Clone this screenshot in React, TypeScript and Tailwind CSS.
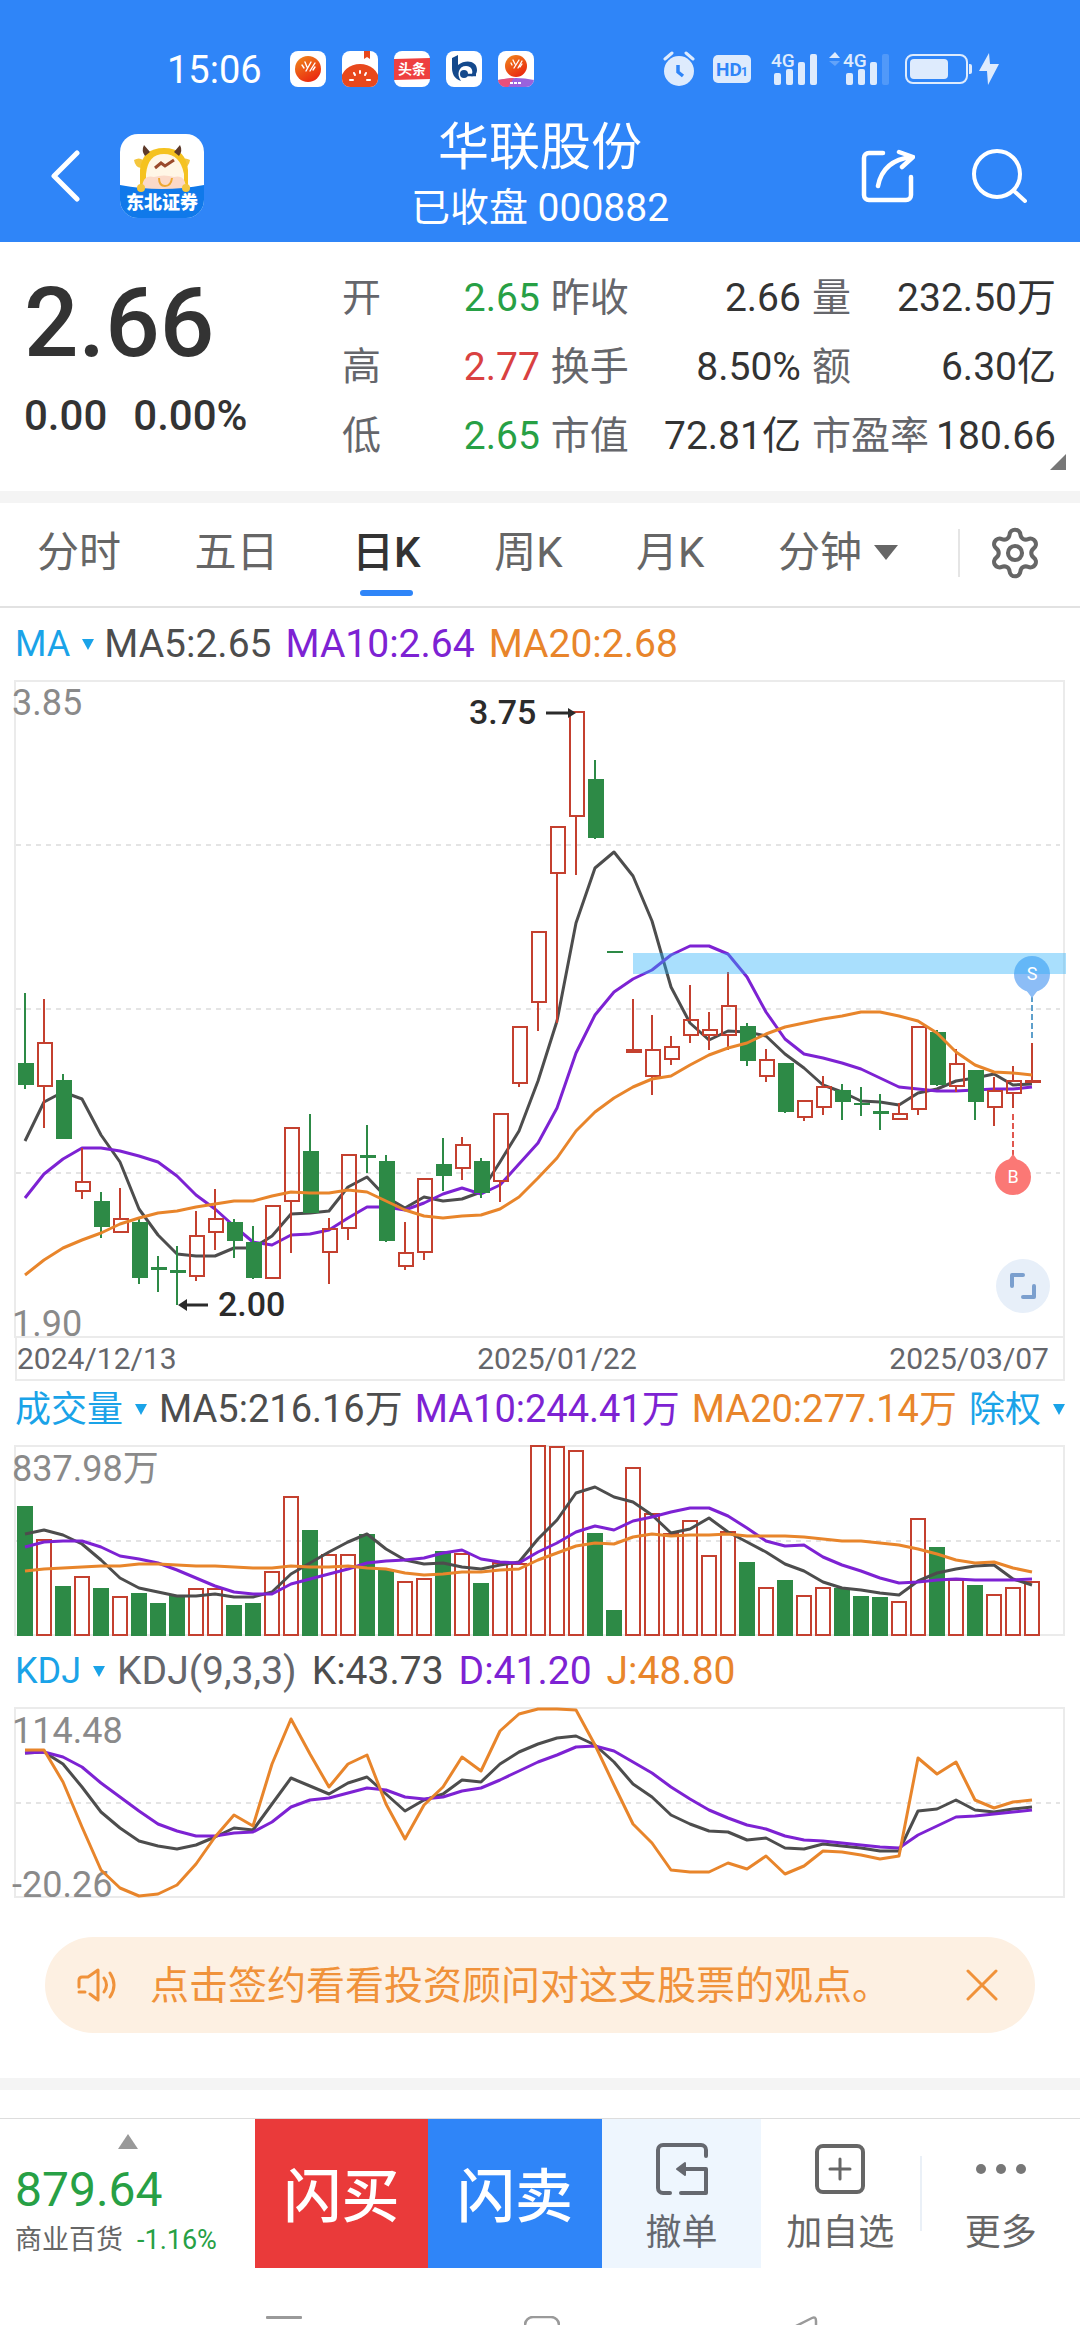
import React from 'react';
import { Settings } from 'lucide-react';

type Candle = ['u' | 'd', number, number, number, number];

const UP = '#c4402f';
const DOWN = '#2d8a46';
const DARK = '#4d4d4d';
const PURPLE = '#7d22d3';
const ORANGE = '#e8852b';

// one slot per trading day
const slotX = (i: number) => 25 + i * 19;

// direction, high, body top, body bottom, low
const candles: Candle[] = [
  ['d', 313, 384, 404, 409], ['u', 319, 363, 406, 448], ['d', 394, 401, 458, 459], ['u', 468, 502, 511, 519],
  ['d', 512, 522, 546, 558], ['u', 508, 539, 552, 552], ['d', 538, 543, 597, 604], ['d', 576, 588, 589, 612],
  ['d', 566, 591, 592, 625], ['u', 531, 556, 596, 601], ['u', 509, 539, 552, 570], ['d', 539, 543, 560, 578],
  ['d', 546, 563, 597, 599], ['u', 526, 526, 598, 598], ['u', 448, 448, 521, 573], ['d', 434, 472, 532, 532],
  ['u', 538, 549, 572, 604], ['u', 475, 475, 548, 560], ['d', 445, 476, 477, 493], ['d', 475, 482, 560, 562],
  ['u', 542, 573, 586, 590], ['u', 499, 499, 572, 580], ['d', 458, 485, 495, 511], ['u', 457, 465, 488, 500],
  ['d', 478, 482, 512, 518], ['u', 434, 434, 501, 522], ['u', 347, 347, 403, 407], ['u', 252, 252, 322, 351],
  ['u', 147, 147, 193, 343], ['u', 32, 32, 136, 195], ['d', 80, 100, 157, 159], ['d', 272, 272, 272, 272],
  ['u', 319, 370, 372, 372], ['u', 335, 370, 396, 415], ['u', 356, 367, 379, 385], ['u', 305, 340, 355, 363],
  ['u', 332, 350, 355, 370], ['u', 292, 326, 355, 370], ['d', 343, 347, 380, 386], ['u', 369, 380, 396, 402],
  ['d', 384, 384, 431, 433], ['u', 421, 421, 437, 441], ['u', 396, 407, 427, 435], ['d', 404, 411, 421, 440],
  ['d', 407, 424, 424, 436], ['d', 414, 432, 433, 450], ['u', 423, 434, 439, 439], ['u', 347, 347, 429, 435],
  ['d', 350, 353, 404, 406], ['u', 369, 384, 406, 412], ['d', 391, 391, 421, 440], ['u', 397, 411, 427, 446],
  ['u', 386, 401, 413, 428], ['u', 363, 401, 402, 402],
];

const priceMa5 = [461, 422, 412, 419, 455, 482, 529, 555, 574, 576, 576, 568, 568, 556, 534, 533, 531, 507, 497, 517, 528, 517, 521, 519, 512, 482, 451, 401, 341, 243, 188, 172, 196, 241, 307, 343, 360, 351, 352, 356, 374, 388, 405, 412, 421, 422, 425, 413, 409, 401, 398, 394, 405, 404];
const priceMa10 = [518, 494, 479, 468, 468, 471, 476, 482, 496, 515, 529, 546, 562, 565, 555, 554, 550, 538, 527, 527, 530, 523, 514, 508, 514, 505, 484, 463, 428, 373, 335, 312, 299, 290, 275, 266, 266, 274, 297, 332, 359, 374, 378, 383, 389, 398, 407, 409, 411, 411, 410, 409, 409, 407];
const priceMa20 = [595, 580, 568, 560, 553, 544, 538, 533, 531, 527, 524, 521, 521, 516, 512, 513, 513, 510, 512, 521, 530, 536, 538, 536, 535, 529, 517, 498, 478, 451, 432, 418, 407, 399, 396, 385, 375, 368, 363, 354, 347, 343, 339, 336, 332, 332, 336, 341, 353, 372, 385, 392, 393, 395];

const volumes = [61, 94, 141, 131, 143, 151, 148, 158, 150, 143, 143, 160, 158, 126, 51, 85, 109, 109, 89, 124, 136, 133, 106, 108, 138, 117, 118, 0, 1, 5, 88, 165, 22, 68, 88, 75, 110, 86, 117, 142, 135, 150, 142, 143, 151, 152, 156, 73, 102, 134, 140, 149, 142, 136];
const volMa5 = [88, 84, 89, 98, 114, 132, 142, 146, 150, 150, 148, 151, 151, 146, 128, 117, 106, 96, 88, 103, 114, 118, 117, 121, 123, 119, 116, 93, 74, 47, 41, 51, 56, 69, 87, 83, 72, 86, 96, 106, 118, 125, 136, 142, 144, 147, 149, 135, 127, 123, 120, 119, 133, 139];
const volMa10 = [101, 96, 95, 95, 101, 110, 113, 117, 124, 132, 140, 146, 148, 148, 138, 133, 128, 123, 117, 115, 114, 112, 107, 104, 113, 116, 117, 106, 97, 86, 80, 84, 75, 71, 66, 62, 62, 70, 82, 95, 100, 99, 111, 119, 125, 132, 137, 136, 134, 133, 134, 134, 134, 133];
const volMa20 = [125, 123, 122, 121, 120, 120, 118, 118, 119, 120, 120, 121, 122, 122, 120, 121, 121, 120, 122, 123, 127, 129, 128, 126, 126, 124, 123, 114, 107, 100, 97, 98, 91, 88, 90, 89, 89, 88, 90, 90, 90, 91, 93, 95, 95, 97, 99, 103, 108, 114, 117, 116, 122, 126];

const kLine = [45, 44, 56, 79, 104, 120, 133, 138, 141, 137, 129, 120, 122, 96, 70, 78, 86, 75, 69, 86, 103, 92, 86, 72, 74, 56, 44, 36, 30, 28, 37, 54, 76, 89, 107, 116, 123, 124, 132, 130, 140, 141, 136, 138, 140, 143, 143, 103, 101, 92, 102, 104, 101, 99];
const dLine = [45, 44, 49, 59, 75, 89, 103, 116, 123, 128, 128, 125, 124, 114, 99, 92, 90, 85, 80, 82, 89, 91, 89, 83, 80, 72, 63, 54, 47, 39, 38, 43, 54, 65, 79, 91, 102, 110, 117, 121, 128, 132, 133, 135, 137, 139, 140, 127, 118, 109, 108, 106, 104, 102];
const jLine = [42, 42, 74, 119, 162, 180, 188, 186, 177, 156, 129, 107, 118, 56, 11, 46, 79, 56, 47, 96, 131, 97, 79, 49, 63, 23, 6, 1, 1, 2, 37, 77, 116, 135, 162, 164, 164, 155, 161, 148, 166, 158, 143, 144, 147, 151, 148, 50, 66, 54, 92, 100, 94, 92];

const quotes = [
  { label: '开', value: '2.65', color: 'text-[#27a045]' },
  { label: '昨收', value: '2.66', color: 'text-[#333333]' },
  { label: '量', value: '232.50万', color: 'text-[#333333]' },
  { label: '高', value: '2.77', color: 'text-[#d94141]' },
  { label: '换手', value: '8.50%', color: 'text-[#333333]' },
  { label: '额', value: '6.30亿', color: 'text-[#333333]' },
  { label: '低', value: '2.65', color: 'text-[#27a045]' },
  { label: '市值', value: '72.81亿', color: 'text-[#333333]' },
  { label: '市盈率', value: '180.66', color: 'text-[#333333]' },
];

const tabs = ['分时', '五日', '日K', '周K', '月K'];

const Line = ({ data, color }: { data: number[]; color: string }) => (
  <polyline
    points={data.map((y, i) => `${slotX(i)},${y}`).join(' ')}
    fill="none"
    stroke={color}
    strokeWidth="3"
    strokeLinejoin="round"
  />
);

const GridLine = ({ y }: { y: number }) => (
  <line x1="16" x2="1060" y1={y} y2={y} stroke="#e4e4e4" strokeWidth="2" strokeDasharray="5 5" />
);

const AxisLabel = ({ y, children }: { y: number; children: string }) => (
  <text x="12" y={y} fontSize="36" fill="#8a8a8a">{children}</text>
);

const Caret = () => (
  <svg className="h-[11px] w-[12px] shrink-0" viewBox="0 0 12 11">
    <path d="M0 0h12L6 11z" fill="#1aa3e8" />
  </svg>
);

const PickerButton = ({ label }: { label: string }) => (
  <button type="button" className="flex items-center gap-3 text-[36px] text-[#1aa3e8]">
    {label}
    <Caret />
  </button>
);

const StatusBar = () => (
  <div className="flex h-[114px] items-center justify-between pt-6 pr-[81px] pl-[167px]">
    <div className="flex items-center gap-4">
      <span className="mr-3 pt-0.5 text-[38px] text-white">15:06</span>
      <svg className="size-9" viewBox="0 0 36 36">
        <defs>
          <linearGradient id="flame" x1="0" y1="0" x2="0.6" y2="1">
            <stop offset="0" stopColor="#f08a1c" />
            <stop offset="1" stopColor="#ea2a10" />
          </linearGradient>
        </defs>
        <rect width="36" height="36" rx="8" fill="#fff" />
        <circle cx="18" cy="18" r="13" fill="url(#flame)" />
        <path d="M12 14l2 3M15 11l2 5M16 20l5-9M20 20l5-8M23 19l2-3" stroke="#fff" strokeWidth="1.4" strokeLinecap="round" />
      </svg>
      <svg className="size-9" viewBox="0 0 36 36">
        <clipPath id="r2"><rect width="36" height="36" rx="8" /></clipPath>
        <g clipPath="url(#r2)">
          <rect width="36" height="36" fill="#fff" />
          <ellipse cx="18" cy="29" rx="19" ry="16" fill="#e8481c" />
          <path d="M22 0h6v8l-3-2-3 2z" fill="#e8481c" />
          <path d="M18 20v2M12 22l1 2M24 22l-1 2M8 29h3M28 29h-3" stroke="#fff" strokeWidth="2" strokeLinecap="round" />
        </g>
      </svg>
      <svg className="size-9" viewBox="0 0 36 36">
        <rect width="36" height="36" rx="8" fill="#fff" />
        <path d="M0 8l36-1v21L0 29z" fill="#ee4040" />
        <text x="18" y="23" fontSize="14" fontWeight="700" textAnchor="middle" fill="#fff">头条</text>
      </svg>
      <svg className="size-9" viewBox="0 0 36 36">
        <rect width="36" height="36" rx="8" fill="#fff" />
        <path d="M6 7l6-3v10c8-6 19-4 19 5 0 4-3 7-6 6 3-4 1-10-5-10-7 0-10 8-5 15-7-2-9-8-9-13z" fill="#14498c" />
        <circle cx="18" cy="23" r="4" fill="#14498c" />
        <path d="M21 24h9" stroke="#14498c" strokeWidth="2.5" />
      </svg>
      <svg className="size-9" viewBox="0 0 36 36">
        <clipPath id="r5"><rect width="36" height="36" rx="8" /></clipPath>
        <g clipPath="url(#r5)">
          <rect width="36" height="36" fill="#fff" />
          <circle cx="18" cy="15" r="11" fill="url(#flame)" />
          <path d="M13 12l1 2M15 9l2 4M16 17l5-8M20 17l4-7M22 16l2-3" stroke="#fff" strokeWidth="1.3" strokeLinecap="round" />
          <path d="M0 29q18-4 36 0v7H0z" fill="#9a62dc" />
          <path d="M0 29q8-2 16-2l-6 9H0z" fill="#e8507a" />
          <path d="M12 32h12" stroke="#fff" strokeWidth="2" strokeDasharray="3 1" />
        </g>
      </svg>
    </div>
    <div className="flex items-center text-[#deebfd]">
      <svg className="h-[36px] w-[32px]" viewBox="0 0 32 36" fill="currentColor">
        <circle cx="16" cy="20" r="15" />
        <path d="M2 8l7-6M30 8l-7-6" stroke="currentColor" strokeWidth="3" strokeLinecap="round" />
        <path d="M15 14v7l5 4" fill="none" stroke="#2f85f8" strokeWidth="3.5" />
      </svg>
      <svg className="ml-[18px] h-[28px] w-[38px]" viewBox="0 0 38 28" fill="currentColor">
        <rect width="38" height="28" rx="5" />
        <text x="3" y="21" fontSize="19" fontWeight="700" fill="#2f85f8">HD</text>
        <text x="28" y="21" fontSize="12" fontWeight="700" fill="#2f85f8">1</text>
      </svg>
      <svg className="ml-[20px] h-[34px] w-[46px] overflow-visible" viewBox="0 0 46 34" fill="currentColor">
        <text x="0" y="15" fontSize="19" fontWeight="500">4G</text>
        <rect x="3" y="21" width="7" height="12" rx="2" />
        <rect x="15" y="17" width="7" height="16" rx="2" />
        <rect x="27" y="10" width="7" height="23" rx="2" />
        <rect x="39" y="2" width="7" height="31" rx="2" />
      </svg>
      <svg className="ml-3 h-[34px] w-[60px] overflow-visible" viewBox="0 0 60 34" fill="currentColor">
        <path d="M0 6l6-6 5 6z" />
        <path d="M0 9h11l-5 5z" opacity="0.3" />
        <text x="14" y="15" fontSize="19" fontWeight="500">4G</text>
        <rect x="17" y="21" width="7" height="12" rx="2" />
        <rect x="29" y="17" width="7" height="16" rx="2" />
        <rect x="41" y="10" width="7" height="23" rx="2" />
        <rect x="53" y="2" width="7" height="31" rx="2" opacity="0.2" />
      </svg>
      <svg className="ml-4 h-[30px] w-[67px]" viewBox="0 0 67 30" fill="currentColor">
        <rect x="1" y="1" width="61" height="28" rx="7" fill="none" stroke="currentColor" strokeWidth="2" />
        <rect x="5" y="5" width="38" height="20" rx="4" />
        <path d="M64 10h1a2 2 0 0 1 2 2v6a2 2 0 0 1-2 2h-1z" />
      </svg>
      <svg className="ml-[7px] h-[32px] w-[20px]" viewBox="0 0 20 32" fill="currentColor">
        <path d="M10 0L0 18h8l1 14L20 11h-9z" />
      </svg>
    </div>
  </div>
);

const BrandLogo = () => (
  <svg className="size-[84px]" viewBox="0 0 84 84" role="img" aria-label="东北证券">
    <clipPath id="brand"><rect width="84" height="84" rx="18" /></clipPath>
    <g clipPath="url(#brand)">
      <rect width="84" height="84" fill="#fff" />
      <path d="M14 26q5-3 9 0l-2 8q-6-1-7-8zM70 26q-5-3-9 0l2 8q6-1 7-8z" fill="#f4c63d" />
      <path d="M20 56V36q2-22 24-22t24 22v20z" fill="#f5c21f" />
      <path d="M24 11q-3 6 1 11l5-4zM60 11q3 6-1 11l-5-4z" fill="#5e3a2a" />
      <path d="M26 56V40q2-20 18-20t20 20v16z" fill="#fff6e6" />
      <path d="M22 56q0-16 12-13 10-3 20 0 12-3 12 13z" fill="#fbd9c8" />
      <path d="M35 34l6-5 4 3 9-6" stroke="#9a4a2c" strokeWidth="3" fill="none" />
      <path d="M39 44q0 8 6 8t7-8" stroke="#eea832" strokeWidth="2" fill="none" />
      <path d="M0 51q42 8 84 0v33H0z" fill="#1079ea" />
      <circle cx="21" cy="54" r="4" fill="#f4c63d" />
      <circle cx="66" cy="54" r="4" fill="#f4c63d" />
      <text x="42" y="75" fontSize="18" fontWeight="900" textAnchor="middle" fill="#fff">东北证券</text>
    </g>
  </svg>
);

const Header = () => (
  <header className="bg-[#2f85f8] text-white">
    <StatusBar />
    <div className="grid h-[128px] grid-cols-[1fr_auto_1fr] items-center pb-1">
      <div className="flex items-center gap-[40px] pl-[50px]">
        <button type="button" aria-label="返回">
          <svg className="h-[52px] w-[30px]" viewBox="0 0 30 52" fill="none" stroke="currentColor" strokeWidth="5" strokeLinecap="round" strokeLinejoin="round">
            <path d="M27 3L4 26l23 23" />
          </svg>
        </button>
        <BrandLogo />
      </div>
      <div className="pt-1 text-center">
        <h1 className="text-[51px] leading-[60px]">华联股份</h1>
        <p className="text-[39px] leading-[60px]">已收盘 000882</p>
      </div>
      <div className="flex items-center justify-end gap-[56px] pr-[53px]">
        <button type="button" aria-label="分享">
          <svg className="size-[56px]" viewBox="0 0 56 56" fill="none" stroke="currentColor" strokeWidth="4.5" strokeLinecap="round" strokeLinejoin="round">
            <path d="M24 5H10a5 5 0 0 0-5 5v37a5 5 0 0 0 5 5h37a5 5 0 0 0 5-5V29" />
            <path d="M19 38Q24 12 53 9M40 4l14 5-11 10" />
          </svg>
        </button>
        <button type="button" aria-label="搜索">
          <svg className="size-[56px]" viewBox="0 0 56 56" fill="none" stroke="currentColor" strokeWidth="4" strokeLinecap="round">
            <circle cx="26" cy="26" r="23" />
            <path d="M43 43l11 10" />
          </svg>
        </button>
      </div>
    </div>
  </header>
);

const QuoteSummary = () => (
  <section className="relative flex h-[249px] pl-[24px]">
    <div className="w-[318px] text-[#333333]">
      <div className="mt-[28px] text-[96px] leading-[106px] font-medium">2.66</div>
      <div className="mt-[12px] flex gap-[26px] text-[42px] leading-[56px] font-medium">
        <span>0.00</span>
        <span>0.00%</span>
      </div>
    </div>
    <dl className="mt-[22px] grid flex-1 grid-cols-[197fr_249fr_243fr] content-start gap-x-[11px] pr-[24px] text-[39px] leading-[69px]">
      {quotes.map((q) => (
        <div key={q.label} className="flex justify-between whitespace-nowrap">
          <dt className="text-[#65666b]">{q.label}</dt>
          <dd className={q.color}>{q.value}</dd>
        </div>
      ))}
    </dl>
    <svg className="absolute right-[14px] bottom-[21px] size-4" viewBox="0 0 16 16">
      <path d="M16 0v16H0z" fill="#777" />
    </svg>
  </section>
);

const PeriodTabs = () => (
  <nav className="flex h-[105px] items-center border-b-2 border-[#e2e2e2] pb-1 text-[42px] text-[#666666]">
    <div className="flex flex-1 items-center justify-between pr-[60px] pl-[37px]">
      {tabs.map((tab) => (
        <button key={tab} type="button" className={tab === '日K' ? 'relative font-medium text-[#333333]' : ''}>
          {tab}
          {tab === '日K' && <span className="absolute inset-x-2 -bottom-3 h-[6px] rounded-full bg-[#2f85f8]" />}
        </button>
      ))}
      <button type="button" className="flex items-center gap-3">
        分钟
        <svg className="h-[15px] w-6" viewBox="0 0 24 15"><path d="M0 0h24L12 15z" fill="#666" /></svg>
      </button>
    </div>
    <button type="button" aria-label="设置" className="flex h-12 w-[122px] items-center border-l-2 border-[#e5e5e5] pl-[27px]">
      <Settings size={56} strokeWidth={1.75} />
    </button>
  </nav>
);

const PriceChart = () => (
  <div className="relative">
    <svg className="block w-full overflow-visible" viewBox="0 0 1080 658">
      <rect x="15" y="1" width="1049" height="656" fill="none" stroke="#ebebeb" strokeWidth="2" />
      <GridLine y={165} />
      <GridLine y={329} />
      <GridLine y={493} />
      <AxisLabel y={35}>3.85</AxisLabel>
      <AxisLabel y={656}>1.90</AxisLabel>
      <Line data={priceMa5} color={DARK} />
      <Line data={priceMa10} color={PURPLE} />
      {candles.map(([dir, high, top, bottom, low], i) => {
        const x = slotX(i);
        const up = dir === 'u';
        const color = up ? UP : DOWN;
        return (
          <g key={i} stroke={color} strokeWidth="2">
            {high < top && <line x1={x} x2={x} y1={high} y2={top} />}
            {low > bottom && <line x1={x} x2={x} y1={bottom} y2={low} />}
            {bottom === top ? (
              <line x1={x - 7} x2={x + 9} y1={top} y2={top} />
            ) : (
              <rect x={x - 6} y={top} width="14" height={bottom - top} fill={up ? 'none' : DOWN} />
            )}
          </g>
        );
      })}
      <Line data={priceMa20} color={ORANGE} />
      <g fill="#2b2b2b" stroke="#2b2b2b">
        <path d="M546 33h24" strokeWidth="3" />
        <path d="M568 28l8 5-8 5z" stroke="none" />
        <path d="M208 625h-24" strokeWidth="3" />
        <path d="M187 619l-9 6 9 6z" stroke="none" />
      </g>
      <text x="469" y="44" fontSize="34" fontWeight="500" fill="#2b2b2b">3.75</text>
      <text x="218" y="636" fontSize="34" fontWeight="500" fill="#2b2b2b">2.00</text>
      <line x1="1032" x2="1032" y1="316" y2="360" stroke="#5d9fcb" strokeWidth="2" strokeDasharray="6 3" />
      <path d="M1026 310h12l-6 8z" fill="#8cbdf6" />
      <circle cx="1032" cy="294" r="18" fill="#8cbdf6" />
      <rect x="633" y="273" width="433" height="21" fill="#29b0fa" opacity="0.4" />
      <text x="1032" y="300" fontSize="18" textAnchor="middle" fill="#fff">S</text>
      <line x1="1013" x2="1013" y1="434" y2="476" stroke="#e0574f" strokeWidth="2" strokeDasharray="6 3" />
      <path d="M1007 482h12l-6-8z" fill="#fb7875" />
      <circle cx="1013" cy="497" r="18" fill="#fb7875" />
      <text x="1013" y="503" fontSize="18" textAnchor="middle" fill="#fff">B</text>
    </svg>
    <button type="button" aria-label="全屏" className="absolute right-[30px] bottom-[25px] flex size-[54px] items-center justify-center rounded-full bg-[#e7eff9]">
      <svg className="size-7" viewBox="0 0 28 28" fill="none" stroke="#7b9fce" strokeWidth="4" strokeLinecap="round" strokeLinejoin="round">
        <path d="M3 14V3h11M14 25h11V14" />
      </svg>
    </button>
  </div>
);

const VolumeChart = () => (
  <svg className="block w-full overflow-visible" viewBox="0 0 1080 190">
    <rect x="15" y="0" width="1049" height="189" fill="none" stroke="#ebebeb" strokeWidth="2" />
    <GridLine y={95} />
    <AxisLabel y={35}>837.98万</AxisLabel>
    {volumes.map((top, i) => {
      const up = candles[i][0] === 'u';
      return (
        <rect
          key={i}
          x={slotX(i) - 7}
          y={top}
          width="14"
          height={189 - top}
          fill={up ? 'none' : DOWN}
          stroke={up ? UP : DOWN}
          strokeWidth="2"
        />
      );
    })}
    <Line data={volMa5} color={DARK} />
    <Line data={volMa10} color={PURPLE} />
    <Line data={volMa20} color={ORANGE} />
  </svg>
);

const KdjChart = () => (
  <svg className="block w-full overflow-visible" viewBox="0 0 1080 190">
    <rect x="15" y="0" width="1049" height="189" fill="none" stroke="#ebebeb" strokeWidth="2" />
    <GridLine y={95} />
    <AxisLabel y={35}>114.48</AxisLabel>
    <AxisLabel y={189}>-20.26</AxisLabel>
    <Line data={kLine} color={DARK} />
    <Line data={dLine} color={PURPLE} />
    <Line data={jLine} color={ORANGE} />
  </svg>
);

const NoticeBanner = () => (
  <div className="mx-[45px] mt-[39px] flex h-24 items-center rounded-full bg-[#fdf0e2] pr-[37px] pl-[32px] text-[#f0923a]">
    <svg className="h-[34px] w-[40px]" viewBox="0 0 40 34" fill="none" stroke="currentColor" strokeWidth="3" strokeLinecap="round" strokeLinejoin="round">
      <path d="M2 19v-7a3 3 0 0 1 3-3h6L21 2v30l-8-6M2 24h6" />
      <path d="M27 10q5 7 0 14M33 5q8 12 0 24" />
    </svg>
    <p className="ml-[33px] flex-1 pt-0.5 text-[39px]">点击签约看看投资顾问对这支股票的观点。</p>
    <button type="button" aria-label="关闭">
      <svg className="size-8" viewBox="0 0 32 32" stroke="currentColor" strokeWidth="3" strokeLinecap="round">
        <path d="M2 2l28 28M30 2L2 30" />
      </svg>
    </button>
  </div>
);

const ActionBar = () => (
  <footer className="flex h-[150px] border-t border-[#dddddd]">
    <div className="w-[255px] pl-[15px]">
      <svg className="mt-[15px] ml-[103px] h-[15px] w-5" viewBox="0 0 20 15"><path d="M10 0l10 15H0z" fill="#999" /></svg>
      <div className="mt-[12px] text-[48px] leading-[58px] text-[#27a045]">879.64</div>
      <div className="mt-[3px] flex gap-[14px] text-[27px] leading-[36px]">
        <span className="text-[#666666]">商业百货</span>
        <span className="text-[#27a045]">-1.16%</span>
      </div>
    </div>
    <button type="button" className="w-[173px] bg-[#ea3a3a] pt-2 text-[58px] font-medium text-white">闪买</button>
    <button type="button" className="w-[174px] bg-[#2f85f8] pt-2 text-[58px] font-medium text-white">闪卖</button>
    <button type="button" className="flex w-[159px] flex-col items-center gap-[13px] bg-[#eef6fe] pt-[23px] text-[36px] leading-[48px] text-[#65686f]">
      <svg className="size-[54px]" viewBox="0 0 54 54" fill="none" stroke="currentColor" strokeWidth="4" strokeLinecap="round" strokeLinejoin="round">
        <path d="M51 14V8a5 5 0 0 0-5-5H8a5 5 0 0 0-5 5v38a5 5 0 0 0 5 5h7M26 51h25V27H28" />
        <path d="M22 27l8-6v12z" fill="currentColor" strokeWidth="2" />
      </svg>
      撤单
    </button>
    <button type="button" className="flex flex-1 flex-col items-center gap-[13px] pt-[23px] text-[36px] leading-[48px] text-[#666666]">
      <svg className="size-[54px]" viewBox="0 0 54 54" fill="none" stroke="currentColor" strokeWidth="4" strokeLinecap="round">
        <rect x="4" y="4" width="46" height="46" rx="6" />
        <path d="M27 17v20M17 27h20" strokeWidth="3" />
      </svg>
      加自选
    </button>
    <div className="mt-[37px] h-[75px] w-[2px] bg-[#eaf0f7]" />
    <button type="button" className="flex flex-1 flex-col items-center gap-[13px] pt-[23px] text-[36px] leading-[48px] text-[#666666]">
      <svg className="size-[54px]" viewBox="0 0 54 54" fill="#777">
        <circle cx="7" cy="27" r="5" />
        <circle cx="27" cy="27" r="5" />
        <circle cx="47" cy="27" r="5" />
      </svg>
      更多
    </button>
  </footer>
);

const SystemNav = () => (
  <div className="flex justify-between overflow-hidden pt-12 pr-[262px] pl-[266px]">
    <svg className="h-[9px] w-[36px]" viewBox="0 0 36 9"><rect width="36" height="3" rx="1" fill="#9a9a9a" /></svg>
    <svg className="mr-3 h-[9px] w-[36px]" viewBox="0 0 36 9"><rect x="1" y="1" width="34" height="34" rx="8" fill="none" stroke="#9a9a9a" strokeWidth="2.5" /></svg>
    <svg className="h-[9px] w-[24px]" viewBox="0 0 24 9"><path d="M0 11L18 2q4-2 4 3v12" fill="none" stroke="#9a9a9a" strokeWidth="2.5" /></svg>
  </div>
);

export default function App() {
  return (
    <div className="min-h-screen bg-white font-[Roboto,'Noto_Sans_CJK_SC',sans-serif]">
      <Header />
      <QuoteSummary />
      <div className="h-3 bg-[#f4f4f4]" />
      <PeriodTabs />

      <main>
        <div className="flex h-[72px] items-center gap-[10px] pl-[15px] text-[39px]">
          <PickerButton label="MA" />
          <div className="flex gap-[14px]">
            <span className="text-[#4d4d4d]">MA5:2.65</span>
            <span className="text-[#7d22d3]">MA10:2.64</span>
            <span className="text-[#e8852b]">MA20:2.68</span>
          </div>
        </div>
        <PriceChart />
        <div className="mx-[15px] flex h-[43px] items-center justify-between border-x-2 border-b-2 border-[#ebebeb] pr-[14px] text-[30px] text-[#65666b]">
          <span>2024/12/13</span>
          <span className="pl-12">2025/01/22</span>
          <span>2025/03/07</span>
        </div>

        <div className="flex h-[65px] items-center justify-between px-[15px] pb-2 text-[38px] whitespace-nowrap">
          <PickerButton label="成交量" />
          <span className="text-[#4d4d4d]">MA5:216.16万</span>
          <span className="text-[#7d22d3]">MA10:244.41万</span>
          <span className="text-[#e8852b]">MA20:277.14万</span>
          <PickerButton label="除权" />
        </div>
        <VolumeChart />

        <div className="flex h-[72px] items-center gap-[12px] pb-0.5 pl-[15px] text-[39px]">
          <PickerButton label="KDJ" />
          <div className="flex gap-[15px]">
            <span className="text-[#65666b]">KDJ(9,3,3)</span>
            <span className="text-[#4d4d4d]">K:43.73</span>
            <span className="text-[#7d22d3]">D:41.20</span>
            <span className="text-[#e8852b]">J:48.80</span>
          </div>
        </div>
        <KdjChart />

        <NoticeBanner />
        <div className="mt-[45px] mb-7 h-3 bg-[#f4f4f4]" />
      </main>

      <ActionBar />
      <SystemNav />
    </div>
  );
}
